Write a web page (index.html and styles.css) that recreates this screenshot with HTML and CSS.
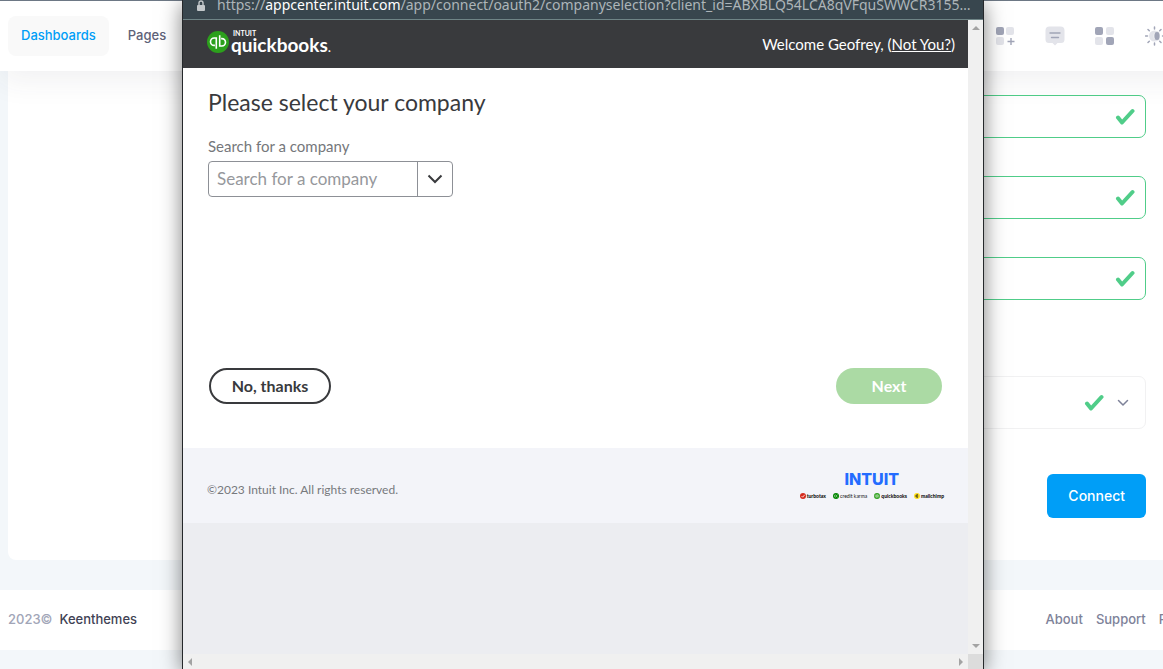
FILE: index.html
```html
<!DOCTYPE html>
<html lang="en">
<head>
<meta charset="utf-8">
<title>Connect</title>
<link rel="stylesheet" href="styles.css">
</head>
<body>
<svg class="defs" aria-hidden="true">
  <symbol id="check" viewBox="0 0 20 18"><path d="M3 9.500 7 14.500 17.500 3" fill="none" stroke="#50cd89" stroke-width="4" stroke-linecap="round" stroke-linejoin="round"/></symbol>
  <symbol id="qb" viewBox="0 0 22 22"><circle cx="11" cy="11" r="11" fill="#2ca01c"/><path d="M9.300 7H7.200a3.700 3.700 0 0 0 0 7.400h.700M9.300 6.200v11.500M12.700 15h2.100a3.700 3.700 0 0 0 0-7.400h-.700M12.700 15.800V4.300" fill="none" stroke="#fff" stroke-width="1.600"/></symbol>
</svg>
<div class="page">
  <header class="topbar">
    <nav class="menu">
      <a class="menu-link active" href="#">Dashboards</a>
      <a class="menu-link" href="#">Pages</a>
    </nav>
    <div class="tools">
      <button class="tool" aria-label="Add widget"><svg viewBox="0 0 20 20"><rect x="1" y="1" width="8" height="8" rx="2" fill="#a1a5b7"/><path d="M14 1h3a2 2 0 0 1 2 2v4a2 2 0 0 1-2 2h-4a2 2 0 0 1-2-2V3a2 2 0 0 1 2-2zM3 11h4a2 2 0 0 1 2 2v4a2 2 0 0 1-2 2H3a2 2 0 0 1-2-2v-4a2 2 0 0 1 2-2z" fill="#e3e4ea"/><path d="M16 12v7M12.500 15.500h7" stroke="#a1a5b7" stroke-width="1.400"/></svg></button>
      <button class="tool" aria-label="Messages"><svg viewBox="0 0 20 20"><path d="M4.500.500h11a4 4 0 0 1 4 4v9a3.500 3.500 0 0 1-3.500 3.500h-3.500L10 19.500 7.500 17H4A3.500 3.500 0 0 1 .500 13.500v-9a4 4 0 0 1 4-4z" fill="#e3e4ea"/><path d="M5 7h10M6.500 11.500h7" stroke="#a1a5b7" stroke-width="1.400" stroke-linecap="round"/></svg></button>
      <button class="tool" aria-label="Apps"><svg viewBox="0 0 20 20"><rect x="0" y="1" width="8" height="8" rx="2" fill="#a1a5b7"/><rect x="11" y="1" width="8" height="8" rx="2" fill="#e3e4ea"/><rect x="0" y="11" width="8" height="8" rx="2" fill="#e3e4ea"/><rect x="11" y="11" width="8" height="8" rx="2" fill="#a1a5b7"/></svg></button>
      <button class="tool" aria-label="Theme"><svg viewBox="0 0 20 20"><circle cx="9.500" cy="10" r="5.500" fill="#e3e4ea"/><ellipse cx="12" cy="10" rx="3" ry="4.500" fill="#a1a5b7" stroke="#fff" stroke-width=".600"/><path d="M9.500 1v2M9.500 17v2M.500 10h2M17.500 10h2M3 3.500l1.300 1.300M3 16.500l1.300-1.300M16 3.500l-1.300 1.300M16 16.500l-1.300-1.300" stroke="#a1a5b7" stroke-width="1.500" stroke-linecap="round"/></svg></button>
    </div>
  </header>
  <main class="card">
    <form class="form">
      <div class="field"><input type="text" aria-label="Client ID"><svg class="check"><use href="#check"/></svg></div>
      <div class="field"><input type="text" aria-label="Client secret"><svg class="check"><use href="#check"/></svg></div>
      <div class="field"><input type="text" aria-label="Redirect URL"><svg class="check"><use href="#check"/></svg></div>
      <button type="button" class="accordion" aria-label="Expand section"><svg class="check"><use href="#check"/></svg><svg class="chevron" viewBox="0 0 12 8"><path d="M1.500 1.500 6 6l4.500-4.500" fill="none" stroke="#7e8299" stroke-width="1.500" stroke-linecap="round" stroke-linejoin="round"/></svg></button>
      <button type="button" class="connect">Connect</button>
    </form>
  </main>
  <footer class="bottom">
    <p class="copy"><span>2023©</span><a href="#">Keenthemes</a></p>
    <nav class="links"><a href="#">About</a><a href="#">Support</a><a href="#">Purchase</a></nav>
  </footer>
</div>

<section class="window" aria-label="Company selection">
  <div class="urlbar">
    <svg class="lock" viewBox="0 0 8 12"><path d="M2 6V3a2 2 0 0 1 4 0v3" fill="none" stroke="#c3c8cb" stroke-width="1.400"/><rect y="5" width="8" height="6" rx="1" fill="#c3c8cb"/></svg>
    <span class="url">https://<b>appcenter.intuit.com</b>/app/connect/oauth2/companyselection?client_id=ABXBLQ54LCA8qVFquSWWCR3155…</span>
  </div>
  <div class="viewport">
    <div class="content">
      <header class="qb-header">
        <div class="qb-logo"><svg class="qb-mark"><use href="#qb"/></svg><div class="qb-words"><span class="qb-intuit">INTUIT</span><span class="qb-name">quickbooks<small>.</small></span></div></div>
        <p class="welcome">Welcome Geofrey, (<a href="#">Not You?</a>)</p>
      </header>
      <div class="select-company">
        <h1>Please select your company</h1>
        <label for="company">Search for a company</label>
        <div class="combo"><input id="company" type="text" placeholder="Search for a company"><button type="button" aria-label="Show companies"><svg viewBox="0 0 16 10"><path d="M1.500 1.500 8 8l6.500-6.500" fill="none" stroke="#393a3d" stroke-width="2"/></svg></button></div>
        <div class="actions"><button type="button" class="pill outline">No, thanks</button><button type="button" class="pill next">Next</button></div>
      </div>
      <footer class="qb-footer">
        <p>©2023 Intuit Inc. All rights reserved.</p>
        <div class="brands">
          <strong class="intuit">INTUIT</strong>
          <div class="brand-row">
            <span class="brand"><svg viewBox="0 0 6 6"><circle cx="3" cy="3" r="3" fill="#d52b1e"/><path d="M1.500 3 2.700 4.200 4.700 1.800" fill="none" stroke="#fff" stroke-width=".800"/></svg>turbotax</span>
            <span class="brand light"><svg viewBox="0 0 6 6"><circle cx="3" cy="3" r="3" fill="#008600"/><path d="M2.700 1.800a1.200 1.200 0 1 0 0 2.400M3 3l1.500-1.200M3 3l1.500 1.200" fill="none" stroke="#fff" stroke-width=".500"/></svg>credit karma</span>
            <span class="brand"><svg><use href="#qb"/></svg>quickbooks</span>
            <span class="brand"><svg viewBox="0 0 6 6"><circle cx="3" cy="3" r="3" fill="#ffe01b"/><path d="M4 2a1.300 1.300 0 1 0 0 2M2.600 3h1.600" fill="none" stroke="#222" stroke-width=".900"/></svg>mailchimp</span>
          </div>
        </div>
      </footer>
    </div>
    <div class="scroll-v"><svg viewBox="0 0 8 4"><path d="M0 4 4 0l4 4z"/></svg><svg viewBox="0 0 8 4"><path d="M0 0 4 4l4-4z"/></svg></div>
    <div class="scroll-h"><svg viewBox="0 0 4 8"><path d="M4 0 0 4l4 4z"/></svg><svg viewBox="0 0 4 8"><path d="M0 0 4 4 0 8z"/></svg></div>
    <div class="corner"></div>
  </div>
</section>
</body>
</html>
```
FILE: styles.css
```css
* { box-sizing: border-box; }
body { margin: 0; background: #f3f7fa; font-family: Inter, "Liberation Sans", sans-serif; font-size: 13px; font-weight: 500; overflow: hidden; }
button, input { font: inherit; }
button { border: 0; background: none; padding: 0; cursor: pointer; }
a { color: inherit; text-decoration: none; }
p, h1 { margin: 0; }
svg { display: block; flex: none; }
.defs { display: none; }

/* Dashboard */
.page { width: calc(100% + 60px); min-height: 100vh; }
.topbar { position: relative; display: flex; align-items: center; justify-content: space-between; height: 71px; padding: 0 58px 0 8px; background: #fff; border-top: 1px solid #6d7885; box-shadow: 0 10px 30px rgba(60, 60, 70, .07); }
.menu { display: flex; gap: 6px; }
.menu-link { height: 40px; padding: 0 13px; line-height: 38px; border-radius: 8px; color: #5e6278; }
.menu-link.active { background: #f9f9f9; color: #009ef7; }
.tools { display: flex; gap: 30px; }
.tool svg { width: 20px; height: 20px; }
.card { margin: 0 8px; padding: 24px 69px 42px 24px; background: #fff; border-radius: 0 0 8px 8px; }
.form { display: flex; flex-direction: column; gap: 38px; padding-left: 25%; }
.field { display: flex; align-items: center; height: 43px; padding-right: 10px; border: 1px solid #50cd89; border-radius: 7px; }
.field input { flex: 1; min-width: 0; border: 0; outline: 0; background: none; }
.check { width: 20px; height: 18px; }
.accordion { display: flex; align-items: center; justify-content: flex-end; gap: 13px; height: 53px; margin-top: 38px; padding-right: 16px; border: 1px solid #f1f1f2; border-radius: 7px; }
.chevron { width: 12px; height: 8px; }
.connect { align-self: flex-end; height: 44px; margin-top: 7px; padding: 0 21px 2px; border-radius: 6px; background: #009ef7; color: #fff; font-size: 14px; }
.bottom { display: flex; align-items: center; justify-content: space-between; height: 60px; margin-top: 30px; padding: 0 6px 2px 8px; background: #fff; }
.copy { display: flex; gap: 7px; color: #a1a5b7; }
.copy a { color: #3f4254; }
.links { display: flex; gap: 13px; color: #7e8299; }

/* Popup window */
.window { position: absolute; top: 0; left: 182px; width: 802px; height: 100vh; display: flex; flex-direction: column; border: solid #25282b; border-width: 0 1px; background: #ecedf1; box-shadow: 0 4px 20px rgba(0, 0, 0, .5); font-family: Lato, sans-serif; font-weight: 400; color: #393a3d; }
.urlbar { display: flex; align-items: flex-start; gap: 12px; height: 20px; padding-left: 14px; background: #38464e; border-bottom: 1px solid #6f8587; overflow: hidden; }
.lock { width: 8px; height: 12px; }
.url { font-family: "Noto Sans", sans-serif; font-size: 14px; line-height: 10px; color: #adb5b9; white-space: nowrap; }
.url b { color: #fff; font-weight: 400; }
.viewport { flex: 1; min-height: 0; display: grid; grid-template-columns: 1fr 15px; grid-template-rows: 1fr 15px; }
.content { overflow: hidden; }
.qb-header { display: flex; align-items: center; justify-content: space-between; height: 48px; padding: 0 13px 0 24px; background: #393a3d; color: #fff; }
.qb-logo { display: flex; align-items: center; gap: 2px; padding-bottom: 4px; }
.qb-mark { width: 22px; height: 22px; }
.qb-words { display: flex; flex-direction: column; }
.qb-intuit { font-size: 7px; line-height: 7px; padding-left: 2px; font-weight: 700; }
.qb-name { font-size: 19px; line-height: 15px; font-weight: 700; }
.qb-name small { font-weight: 400; font-size: 14px; }
.welcome { font-size: 15px; }
.welcome a { text-decoration: underline; }
.select-company { display: flex; flex-direction: column; align-items: flex-start; height: 380px; padding: 20px 26px 44px 25px; background: #fff; }
h1 { font-size: 23px; line-height: 28px; font-weight: 400; }
label { margin-top: 20px; font-size: 15px; line-height: 20px; color: #75777b; }
.combo { display: flex; width: 245px; height: 36px; margin-top: 5px; border: 1px solid #8d9096; border-radius: 4px; }
.combo input { flex: 1; min-width: 0; padding: 0 8px 2px; border: 0; outline: 0; background: none; font-size: 17px; }
.combo input::placeholder { color: #96989c; opacity: 1; }
.combo button { display: grid; place-items: center; width: 35px; border-left: 1px solid #8d9096; }
.combo svg { width: 16px; height: 10px; }
.actions { display: flex; justify-content: space-between; align-self: stretch; margin-top: auto; padding-left: 1px; }
.pill { height: 36px; padding-bottom: 2px; border-radius: 18px; font-size: 16px; font-weight: 700; }
.outline { width: 122px; border: 2px solid #393a3d; color: #393a3d; }
.next { width: 106px; background: #abdaa4; color: #fff; }
.qb-footer { display: flex; justify-content: space-between; align-items: center; height: 75px; padding: 0 24px; background: #f3f4f9; }
.qb-footer p { padding-top: 8px; font-size: 12px; color: #77797d; }
.brands { display: flex; flex-direction: column; align-items: center; gap: 6px; }
.intuit { font-family: Inter, sans-serif; font-size: 16px; line-height: 14px; font-weight: 800; color: #236cff; }
.brand-row { display: flex; gap: 7px; }
.brand { display: flex; align-items: center; gap: 1px; font-size: 5px; line-height: 8px; font-weight: 900; color: #111; }
.brand svg { width: 6px; height: 6px; }
.light { font-weight: 400; }
.scroll-v, .scroll-h { display: flex; align-items: center; justify-content: space-between; background: #f0f0f0; fill: #a3a3a3; }
.scroll-v { flex-direction: column; padding: 6px 0; }
.scroll-v svg { width: 8px; height: 4px; }
.scroll-h { padding: 0 5px; }
.scroll-h svg { width: 4px; height: 8px; }
.corner { background: #dcdcdc; }
```
